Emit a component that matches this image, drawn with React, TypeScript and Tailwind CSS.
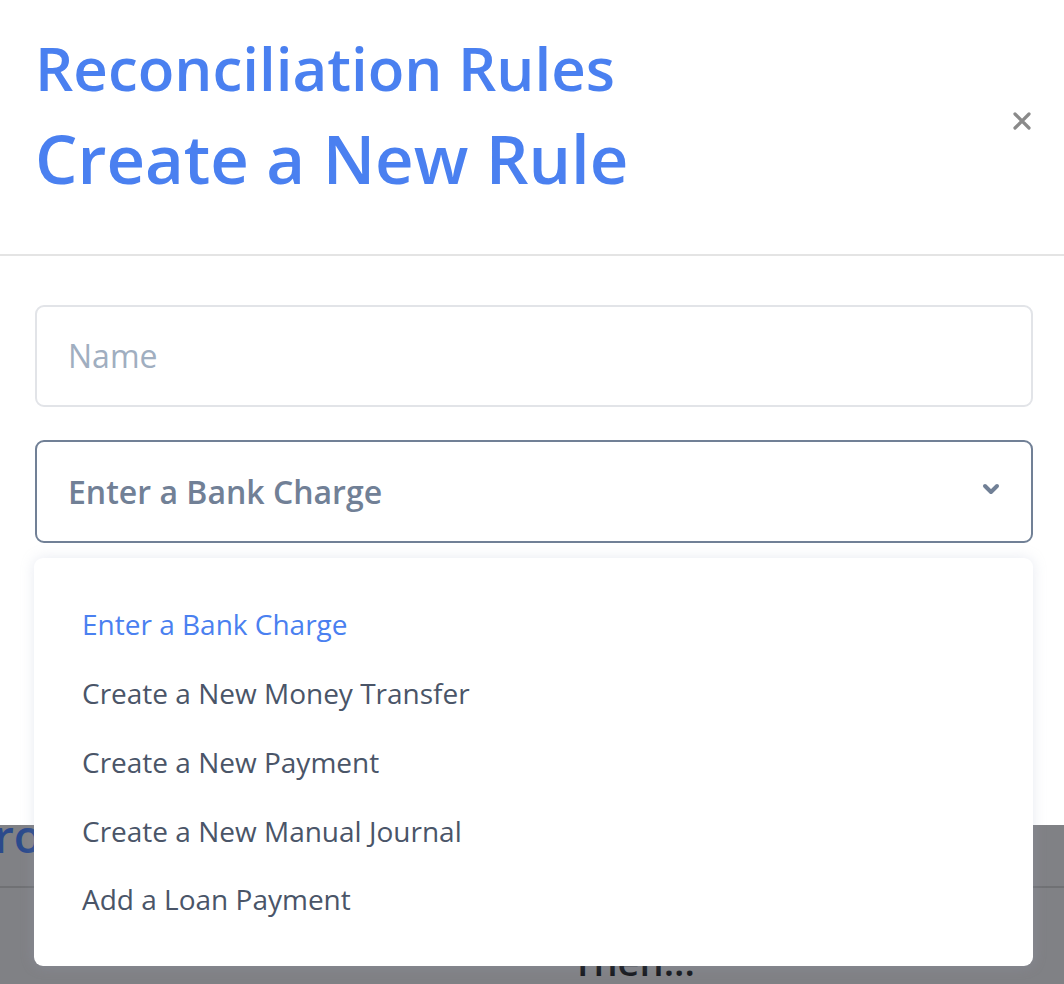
const options = [
  "Enter a Bank Charge",
  "Create a New Money Transfer",
  "Create a New Payment",
  "Create a New Manual Journal",
  "Add a Loan Payment",
];

export default function App() {
  return (
    <div className="relative h-[984px] w-full overflow-hidden bg-[#808185] font-['Open_Sans',sans-serif]">
      {/* page behind the modal, dimmed */}
      <div className="pt-[812px]">
        <div className="-ml-[6px] text-[46px] font-semibold leading-none text-[#2b4a8c]">ro</div>
        <div className="mt-[28px] h-[2px] w-full bg-[#707174]" />
        <div className="ml-[572px] mt-[54px] text-[38px] font-semibold leading-none text-[#17191e]">Then...</div>
      </div>

      {/* modal */}
      <div className="absolute inset-x-0 top-0 h-[825px] bg-white">
        <div className="flex items-start justify-between pb-[62px] pl-[35px] pr-[33px] pt-[38px]">
          <div className="text-[#4a80f0]">
            <h2 className="text-[60px] font-semibold leading-none">Reconciliation Rules</h2>
            <h1 className="mt-[27px] text-[67px] font-semibold leading-none">Create a New Rule</h1>
          </div>
          <button className="mt-[74px] flex text-[#8a8a8a]" aria-label="Close">
            <svg width="18" height="18" viewBox="0 0 18 18" fill="none">
              <path d="M2 2l14 14M16 2L2 16" stroke="currentColor" strokeWidth="3.2" strokeLinecap="round" />
            </svg>
          </button>
        </div>
        <div className="h-[2px] bg-[#e4e4e4]" />

        <div className="relative pl-[35px] pr-[31px] pt-[49px]">
          <div className="flex h-[102px] items-center rounded-[9px] border-2 border-[#e2e4e8] px-[31px] text-[32px] text-[#a0aec0]">
            Name
          </div>
          <div className="mt-[33px] flex h-[103px] items-center justify-between rounded-[9px] border-2 border-[#718096] pl-[31px] pr-[31px]">
            <span className="text-[32px] font-semibold text-[#718096]">Enter a Bank Charge</span>
            <svg width="18" height="12" viewBox="0 0 18 12" fill="none" className="mb-[5px] text-[#718096]">
              <path d="M3 3l6 6 6-6" stroke="currentColor" strokeWidth="4" strokeLinecap="round" strokeLinejoin="round" />
            </svg>
          </div>

          {/* open dropdown list */}
          <div className="absolute left-[34px] right-[31px] top-[302px] z-10 rounded-[9px] bg-white pb-[32px] pt-[32px] shadow-[0_0_14px_rgba(160,170,200,0.25)]">
            {options.map((opt, i) => (
              <div
                key={opt}
                className={
                  "flex h-[68.75px] items-center px-[48px] text-[28px] " +
                  (i === 0 ? "text-[#4a80f0]" : "text-[#4a5568]")
                }
              >
                {opt}
              </div>
            ))}
          </div>
        </div>
      </div>
    </div>
  );
}
